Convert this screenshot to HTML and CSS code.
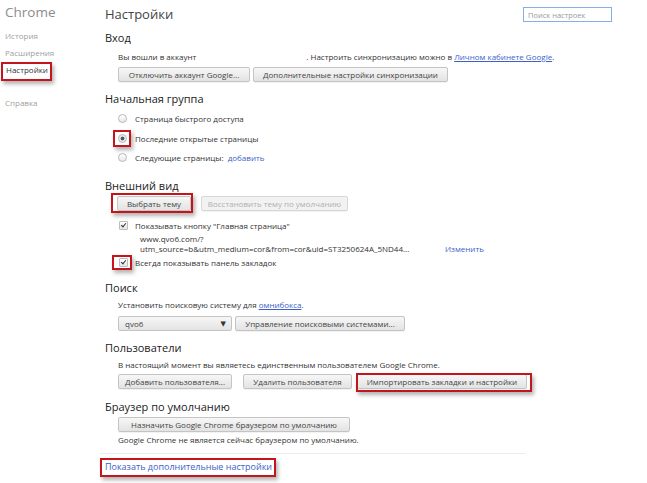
FILE: index.html
```html
<!DOCTYPE html>
<html lang="ru">
<head>
    <meta charset="UTF-8">
    <title>Настройки</title>
    <link rel="stylesheet" href="styles.css">
</head>
<body>
    <div class="page">
        <nav class="sidebar">
            <div class="brand">Chrome</div>
            <ul class="nav">
                <li>История</li>
                <li>Расширения</li>
                <li><span class="active mark mark-nav">Настройки</span></li>
                <li class="help">Справка</li>
            </ul>
        </nav>

        <main class="content">
            <header class="top">
                <h1>Настройки</h1>
                <input class="search" type="text" placeholder="Поиск настроек">
            </header>

            <section class="sec sec-login">
                <h3>Вход</h3>
                <div class="line">Вы вошли в аккаунт<span class="email"></span>. Настроить синхронизацию можно в <a class="ul" href="#">Личном кабинете Google</a>.</div>
                <div class="btns">
                    <button class="btn b-signout">Отключить аккаунт Google...</button>
                    <button class="btn b-sync">Дополнительные настройки синхронизации</button>
                </div>
            </section>

            <section class="sec sec-start">
                <h3>Начальная группа</h3>
                <div class="opt"><span class="radio"></span><span>Страница быстрого доступа</span></div>
                <div class="opt"><span class="radio on mark mark-radio"></span><span>Последние открытые страницы</span></div>
                <div class="opt"><span class="radio"></span><span>Следующие страницы:&nbsp; <a href="#">добавить</a></span></div>
            </section>

            <section class="sec sec-look">
                <h3>Внешний вид</h3>
                <div class="btns">
                    <span class="mark mark-btn"><button class="btn b-theme">Выбрать тему</button></span>
                    <button class="btn btn-off b-reset" disabled>Восстановить тему по умолчанию</button>
                </div>
                <div class="opt chk-row"><span class="check"></span><span>Показывать кнопку "Главная страница"</span></div>
                <div class="home">
                    <div class="url">www.qvo6.com/?<br>utm_source=b&amp;utm_medium=cor&amp;from=cor&amp;uid=ST3250624A_5ND44...</div>
                    <a href="#">Изменить</a>
                </div>
                <div class="opt chk-row"><span class="check mark mark-check"></span><span>Всегда показывать панель закладок</span></div>
            </section>

            <section class="sec sec-search">
                <h3>Поиск</h3>
                <div class="line">Установить поисковую систему для <a class="ul" href="#">омнибокса</a>.</div>
                <div class="btns">
                    <div class="select">qvo6<span class="arrow">▼</span></div>
                    <button class="btn b-engines">Управление поисковыми системами...</button>
                </div>
            </section>

            <section class="sec sec-users">
                <h3>Пользователи</h3>
                <div class="line">В настоящий момент вы являетесь единственным пользователем Google Chrome.</div>
                <div class="btns">
                    <button class="btn b-add">Добавить пользователя...</button>
                    <button class="btn b-del">Удалить пользователя</button>
                    <span class="mark mark-imp"><button class="btn b-import">Импортировать закладки и настройки</button></span>
                </div>
            </section>

            <section class="sec sec-default">
                <h3>Браузер по умолчанию</h3>
                <div class="btns">
                    <button class="btn b-default">Назначить Google Chrome браузером по умолчанию</button>
                </div>
                <div class="line note">Google Chrome не является сейчас браузером по умолчанию.</div>
            </section>

            <footer class="more">
                <a class="link-frame" href="#">Показать дополнительные настройки</a>
            </footer>
        </main>
    </div>
</body>
</html>
```

FILE: styles.css
```css
body {
    margin: 0;
    font-family: "Open Sans", "DejaVu Sans", sans-serif;
    font-size: 8px;
    color: #333;
    background: #fff;
}
a {
    color: #3b62c8;
    text-decoration: none;
}
a.ul {
    text-decoration: underline;
}
.page {
    display: flex;
    padding-bottom: 8px;
}

/* sidebar */
.sidebar {
    width: 105px;
    padding-left: 5px;
    box-sizing: border-box;
}
.brand {
    font-size: 13.5px;
    line-height: 24px;
    color: #8c8c8c;
}
.nav {
    list-style: none;
    margin: 3px 0 0;
    padding: 0;
}
.nav li {
    line-height: 17px;
    color: #a0a0a0;
}
.nav .active {
    color: #333;
    display: inline-block;
    padding-left: 1px;
}
.nav .help {
    margin-top: 16px;
}

/* red annotation frames */
.mark {
    position: relative;
    display: inline-block;
}
.mark::after {
    content: "";
    position: absolute;
    border: 2px solid #c3161c;
    box-shadow: 2px 3px 4px rgba(0, 0, 0, 0.3);
    pointer-events: none;
}
.mark-nav::after { left: -4px; right: -4px; top: 1px; bottom: -3px; }
.mark-radio::after { left: -6px; right: -5px; top: -5px; bottom: -5px; }
.mark-check::after { left: -8px; right: -5px; top: -4px; bottom: -4px; }
.mark-btn::after { left: -6px; right: -2px; top: -3px; bottom: -2px; }
.mark-imp::after { left: -1px; right: -5px; top: -1px; bottom: -3px; }

/* the last frame is a real box so it stays inside the page */
.link-frame {
    display: inline-block;
    padding: 1px 2px 2px 3px;
    border: 2px solid #c3161c;
    box-shadow: 2px 3px 4px rgba(0, 0, 0, 0.3);
}

/* content */
.content {
    width: 507px;
}
.top {
    display: flex;
    justify-content: space-between;
    align-items: center;
    height: 27px;
}
.top h1 {
    margin: 0;
    font-size: 13px;
    font-weight: normal;
    color: #444;
}
.search {
    width: 89px;
    height: 15px;
    box-sizing: border-box;
    border: 1px solid #86aee8;
    font-family: inherit;
    font-size: 7.5px;
    padding: 0 4px;
    margin-top: 2px;
}
.search::placeholder {
    color: #999;
}

.sec h3 {
    margin: 0;
    font-size: 11px;
    font-weight: normal;
    line-height: 14px;
    color: #222;
}
.sec .line, .sec .opt, .sec .btns, .sec .home {
    margin-left: 13px;
}
.line {
    line-height: 12px;
}
.email {
    display: inline-block;
    width: 110px;
}

.btns {
    display: flex;
    gap: 3px;
}
.btn {
    height: 15px;
    padding: 0;
    text-align: center;
    font-family: inherit;
    font-size: 8px;
    line-height: 13px;
    color: #444;
    border: 1px solid #c4c4c4;
    border-radius: 2px;
    background: linear-gradient(#f7f7f7, #e3e3e3);
    box-shadow: 0 1px 0 rgba(0, 0, 0, 0.05);
}
.btn-off {
    color: #b0b0b0;
    background: #f2f2f2;
    border-color: #d8d8d8;
}
.b-signout { width: 132px; }
.b-sync { width: 195px; }
.b-theme { width: 74px; }
.b-reset { width: 147px; }
.b-engines { width: 170px; }
.b-add { width: 114px; }
.b-del { width: 109px; margin-left: 8px; }
.b-import { width: 170px; }
.b-default { width: 232px; }

.sec-login { padding: 4px 0 10px; }
.sec-login .line { margin-top: 6px; }
.sec-login .btns { margin-top: 4px; }

.opt {
    display: flex;
    align-items: center;
    height: 20px;
}
.sec-start { padding-bottom: 13px; }
.sec-start h3 { margin-bottom: 2px; }
.sec-start .opt:last-child { height: 18px; }
.radio {
    width: 9px;
    height: 9px;
    box-sizing: border-box;
    border: 1px solid #b8b8b8;
    border-radius: 50%;
    background: linear-gradient(#fff, #e8e8e8);
    margin-right: 8px;
}
.radio.on {
    background: radial-gradient(circle, #555 0, #555 1.6px, #e2e2e2 2.2px, #f4f4f4 100%);
}

.sec-look { padding-bottom: 11px; }
.sec-look .btns { margin-top: 3px; margin-left: 12px; gap: 10px; }
.chk-row {
    height: 16px;
}
.sec-look .btns + .chk-row { margin-top: 6px; }
.check {
    position: relative;
    width: 9px;
    height: 9px;
    box-sizing: border-box;
    border: 1px solid #bcbcbc;
    border-radius: 1px;
    background: linear-gradient(#fff, #e6e6e6);
    margin: 0 7px 0 1px;
}
.check::before {
    content: "";
    position: absolute;
    left: 2px;
    top: 0;
    width: 2px;
    height: 4px;
    border: solid #333;
    border-width: 0 1.5px 1.5px 0;
    transform: rotate(40deg);
}
.home {
    display: flex;
    align-items: flex-end;
    padding-left: 22px;
    margin-top: 1px;
    line-height: 10px;
}
.url {
    width: 305px;
}

.sec-search { padding-bottom: 10px; }
.sec-search .line { margin-top: 4px; }
.sec-search .btns { margin-top: 5px; }
.select {
    position: relative;
    width: 114px;
    height: 15px;
    box-sizing: border-box;
    padding-left: 6px;
    line-height: 13px;
    color: #444;
    border: 1px solid #c4c4c4;
    border-radius: 2px;
    background: linear-gradient(#f7f7f7, #e3e3e3);
}
.arrow {
    position: absolute;
    right: 5px;
    top: 0;
    font-size: 7px;
    color: #333;
}

.sec-users { padding-bottom: 11px; }
.sec-users .line { margin-top: 4px; }
.sec-users .btns { margin-top: 3px; }
.sec-users .mark-imp { margin-left: 2px; }

.sec-default .btns { margin-top: 3px; }
.sec-default .note { margin-top: 2px; }

.more {
    margin-top: 7px;
    margin-left: -5px;
    width: 425px;
    border-top: 1px solid #ececec;
    padding: 4px 0 0 0;
    font-size: 9px;
    line-height: 12px;
}
```
